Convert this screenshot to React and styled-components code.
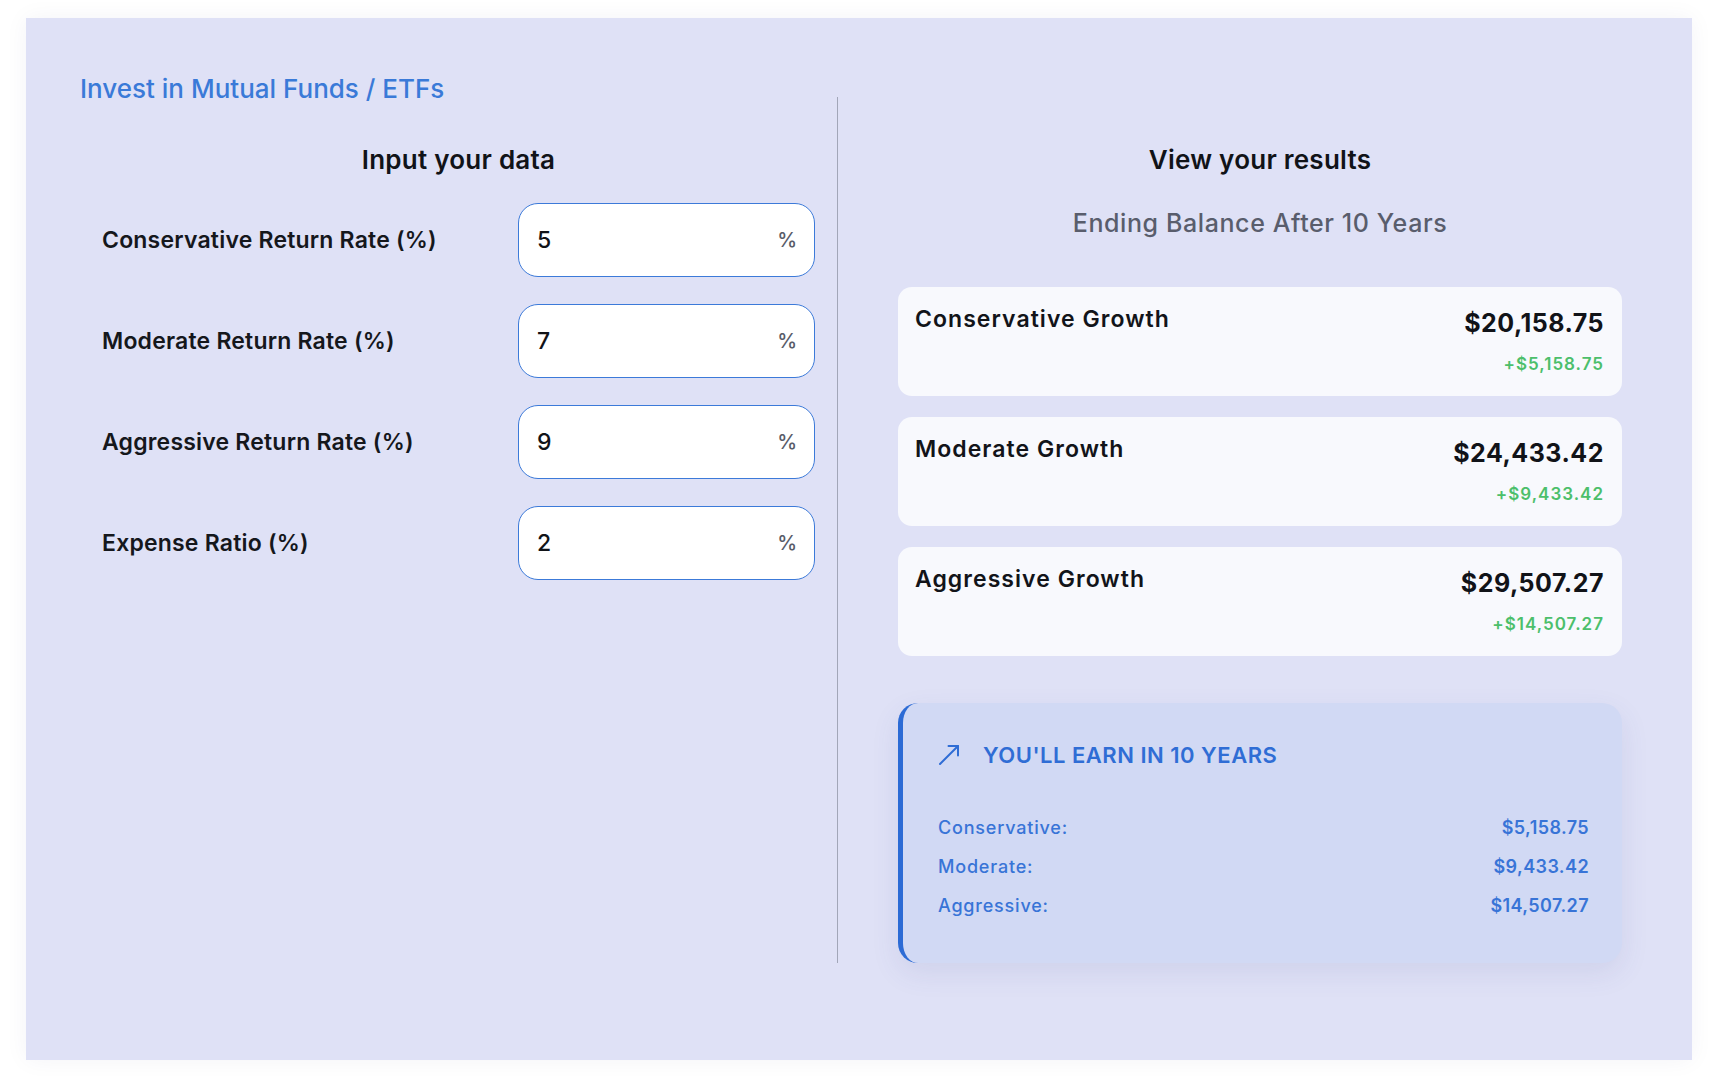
import React from "react";
import styled, { createGlobalStyle } from "styled-components";

const GlobalStyle = createGlobalStyle`
  html, body {
    margin: 0;
    padding: 0;
    background: #ffffff;
  }
  body {
    font-family: Inter, "Noto Sans", "Liberation Sans", sans-serif;
    color: #111318;
  }
  * { box-sizing: border-box; }
`;

const Page = styled.div`
  padding: 18px 0 20px 26px;
`;

const Panel = styled.section`
  width: 1666px;
  min-height: 1042px;
  background: #dfe1f6;
  box-shadow: 0 0 22px rgba(30, 40, 90, 0.05);
  padding: 55px 10px 97px 54px;
  display: flex;
  flex-direction: column;
`;

const Title = styled.h1`
  margin: 0 0 -8px 0;
  font-size: 26px;
  line-height: 32px;
  font-weight: 500;
  color: #3a7ad8;
  letter-spacing: 0;
`;

const Columns = styled.div`
  display: grid;
  grid-template-columns: 758px 844px;
`;

const LeftColumn = styled.div`
  border-right: 1px solid #a2a6b8;
  padding-top: 47px;
`;

const RightColumn = styled.div`
  padding: 47px 60px 0 60px;
  display: flex;
  flex-direction: column;
`;

const ColumnHeading = styled.h2`
  margin: 0;
  text-align: center;
  font-size: 26px;
  line-height: 32px;
  font-weight: 600;
  color: #111318;
  letter-spacing: 0.25px;
`;

const Fields = styled.div`
  margin-top: 27px;
  padding: 0 22px;
  display: flex;
  flex-direction: column;
  gap: 27px;
`;

const FieldRow = styled.label`
  display: flex;
  align-items: center;
  justify-content: space-between;
`;

const FieldLabel = styled.span`
  font-size: 23px;
  font-weight: 600;
  color: #15171c;
  letter-spacing: 0.2px;
`;

const InputBox = styled.div`
  width: 297px;
  height: 74px;
  background: #ffffff;
  border: 1.5px solid #3c7ad9;
  border-radius: 20px;
  display: flex;
  align-items: center;
  padding: 0 17px 0 18px;
`;

const NumberInput = styled.input`
  flex: 1;
  min-width: 0;
  border: none;
  outline: none;
  background: transparent;
  font-family: inherit;
  font-size: 23px;
  font-weight: 500;
  color: #111318;
  padding: 0;
`;

const Unit = styled.span`
  font-size: 20px;
  font-weight: 500;
  color: #585c68;
`;

const Subtitle = styled.h3`
  margin: 31px 0 0 0;
  text-align: center;
  font-size: 25px;
  line-height: 32px;
  font-weight: 500;
  color: #595d6c;
  letter-spacing: 0.6px;
`;

const Cards = styled.div`
  margin-top: 48px;
  display: flex;
  flex-direction: column;
  gap: 21px;
`;

const Card = styled.div`
  background: #f8f9fd;
  border-radius: 14px;
  padding: 18px 18px 19px 17px;
  display: flex;
  justify-content: space-between;
  align-items: flex-start;
`;

const CardTitle = styled.div`
  font-size: 23px;
  line-height: 28px;
  font-weight: 600;
  color: #121419;
  letter-spacing: 1.05px;
`;

const CardFigures = styled.div`
  display: flex;
  flex-direction: column;
  align-items: flex-end;
`;

const Amount = styled.div`
  font-size: 25px;
  line-height: 37.5px;
  font-weight: 700;
  color: #111318;
  letter-spacing: 0.5px;
`;

const Gain = styled.div`
  margin-top: 9px;
  font-size: 17px;
  line-height: 25.5px;
  font-weight: 600;
  color: #4cbf6b;
  letter-spacing: 1px;
`;

const Summary = styled.div`
  margin-top: 47px;
  background: #d1d9f4;
  border-left: 5px solid #2c6bd5;
  border-radius: 20px;
  padding: 37px 33px 44px 35px;
  box-shadow: 0 10px 28px rgba(70, 80, 150, 0.1);
`;

const SummaryHeading = styled.div`
  display: flex;
  align-items: center;
  gap: 23px;
  height: 30px;
`;

const SummaryTitle = styled.span`
  font-size: 22px;
  font-weight: 600;
  letter-spacing: 0.5px;
  color: #2f6dd5;
`;

const SummaryRows = styled.div`
  margin-top: 44px;
  display: flex;
  flex-direction: column;
  gap: 12px;
`;

const SummaryRow = styled.div`
  display: flex;
  justify-content: space-between;
  font-size: 18px;
  line-height: 27px;
  color: #3874d7;
`;

const RowLabel = styled.span`
  font-weight: 500;
  letter-spacing: 0.8px;
`;

const RowValue = styled.span`
  font-weight: 600;
  letter-spacing: 0.4px;
`;

const TrendIcon = () => (
  <svg width="22" height="22" viewBox="0 0 22 22" fill="none" stroke="#2f6dd5" strokeWidth="2" strokeLinecap="round" strokeLinejoin="round">
    <path d="M2 20 L20 2" />
    <path d="M10.5 2 H20 V11.5" />
  </svg>
);

const fields = [
  { label: "Conservative Return Rate (%)", value: "5" },
  { label: "Moderate Return Rate (%)", value: "7" },
  { label: "Aggressive Return Rate (%)", value: "9" },
  { label: "Expense Ratio (%)", value: "2" },
];

const results = [
  { title: "Conservative Growth", amount: "$20,158.75", gain: "+$5,158.75" },
  { title: "Moderate Growth", amount: "$24,433.42", gain: "+$9,433.42" },
  { title: "Aggressive Growth", amount: "$29,507.27", gain: "+$14,507.27" },
];

const earnings = [
  { label: "Conservative:", value: "$5,158.75" },
  { label: "Moderate:", value: "$9,433.42" },
  { label: "Aggressive:", value: "$14,507.27" },
];

export default function App() {
  return (
    <>
      <GlobalStyle />
      <Page>
        <Panel>
          <Title>Invest in Mutual Funds / ETFs</Title>
          <Columns>
            <LeftColumn>
              <ColumnHeading>Input your data</ColumnHeading>
              <Fields>
                {fields.map((f) => (
                  <FieldRow key={f.label}>
                    <FieldLabel>{f.label}</FieldLabel>
                    <InputBox>
                      <NumberInput type="text" defaultValue={f.value} />
                      <Unit>%</Unit>
                    </InputBox>
                  </FieldRow>
                ))}
              </Fields>
            </LeftColumn>
            <RightColumn>
              <ColumnHeading>View your results</ColumnHeading>
              <Subtitle>Ending Balance After 10 Years</Subtitle>
              <Cards>
                {results.map((r) => (
                  <Card key={r.title}>
                    <CardTitle>{r.title}</CardTitle>
                    <CardFigures>
                      <Amount>{r.amount}</Amount>
                      <Gain>{r.gain}</Gain>
                    </CardFigures>
                  </Card>
                ))}
              </Cards>
              <Summary>
                <SummaryHeading>
                  <TrendIcon />
                  <SummaryTitle>YOU'LL EARN IN 10 YEARS</SummaryTitle>
                </SummaryHeading>
                <SummaryRows>
                  {earnings.map((e) => (
                    <SummaryRow key={e.label}>
                      <RowLabel>{e.label}</RowLabel>
                      <RowValue>{e.value}</RowValue>
                    </SummaryRow>
                  ))}
                </SummaryRows>
              </Summary>
            </RightColumn>
          </Columns>
        </Panel>
      </Page>
    </>
  );
}
